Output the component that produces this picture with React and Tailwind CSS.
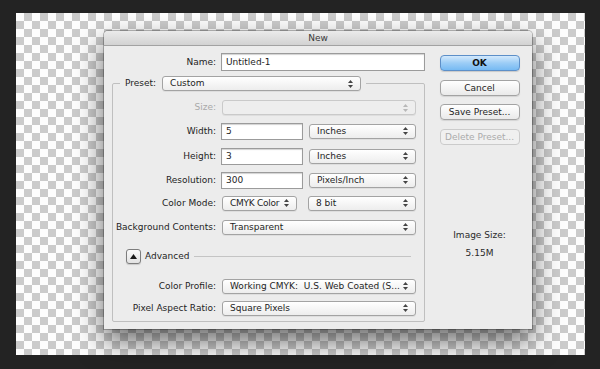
import React from "react";

const font = "font-['DejaVu_Sans',sans-serif]";

function Arrows({ disabled }) {
  return (
    <svg width="5" height="8" viewBox="0 0 5 8" className="ml-auto mr-[7px] shrink-0">
      <polygon points="0,3 2.5,0 5,3" fill={disabled ? "#b8b8b8" : "#444"} />
      <polygon points="0,5 2.5,8 5,5" fill={disabled ? "#b8b8b8" : "#444"} />
    </svg>
  );
}

function Select({ className = "", children, disabled }) {
  return (
    <div
      className={
        "flex items-center h-[15px] rounded-[3px] border pl-[7px] text-[9px] leading-none shadow-[0_1px_0_rgba(0,0,0,0.06)] " +
        (disabled
          ? "border-[#cacaca] bg-[#eeeeee] text-[#aaa] "
          : "border-[#a3a3a3] bg-gradient-to-b from-[#ffffff] to-[#ededed] text-[#1e1e1e] ") +
        className
      }
    >
      <span className="whitespace-nowrap">{children}</span>
      <Arrows disabled={disabled} />
    </div>
  );
}

function Input({ className = "", children }) {
  return (
    <div
      className={
        "flex items-center bg-white border border-[#9b9b9b] shadow-[inset_0_1px_1px_rgba(0,0,0,0.18)] pl-[4px] text-[9px] leading-none text-[#1e1e1e] " +
        className
      }
    >
      {children}
    </div>
  );
}

function Label({ children, disabled }) {
  return (
    <div
      className={
        "w-[103px] shrink-0 text-right pr-0 text-[9px] leading-none whitespace-nowrap " +
        (disabled ? "text-[#a9a9a9]" : "text-[#1e1e1e]")
      }
    >
      {children}
    </div>
  );
}

function Button({ children, variant }) {
  const base =
    "flex items-center justify-center w-[80px] h-[16px] rounded-[4px] border text-[9px] leading-none ";
  if (variant === "default")
    return (
      <div
        className={
          base +
          "border-[#5d8fc8] bg-gradient-to-b from-[#d3e9fc] via-[#9ccdf6] to-[#76baf3] text-[#111] font-bold shadow-[0_1px_1px_rgba(0,0,0,0.15)]"
        }
      >
        {children}
      </div>
    );
  if (variant === "disabled")
    return (
      <div className={base + "border-[#cbcbcb] bg-[#f0f0f0] text-[#ababab]"}>
        {children}
      </div>
    );
  return (
    <div
      className={
        base +
        "border-[#a3a3a3] bg-gradient-to-b from-[#ffffff] to-[#eaeaea] text-[#1e1e1e] shadow-[0_1px_1px_rgba(0,0,0,0.1)]"
      }
    >
      {children}
    </div>
  );
}

export default function App() {
  return (
    <div className={"w-[600px] h-[369px] bg-[#232323] pt-[13px] pl-[16px] " + font}>
      <div className="w-[569px] h-[342px] bg-[repeating-conic-gradient(#cbcbcb_0_25%,#fdfdfd_0_50%)] bg-size-[16px_16px] pt-[18px] pl-[88px]">
        <div className="w-[428px] h-[298px] rounded-t-[4px] bg-[#ececec] shadow-[0_12px_28px_rgba(0,0,0,0.6),0_0_0_1px_rgba(0,0,0,0.25)] flex flex-col overflow-hidden">
          {/* Title bar */}
          <div className="h-[15px] shrink-0 flex items-center justify-center bg-gradient-to-b from-[#ebebeb] to-[#d2d2d2] border-b border-[#a2a2a2] text-[9px] leading-none text-[#3a3a3a]">
            New
          </div>
          <div className="flex flex-1">
            {/* Left column */}
            <div className="w-[321px] flex flex-col">
              <div className="flex items-center mt-[7px] h-[18px]">
                <div className="w-[112px] text-right text-[9px] leading-none text-[#1e1e1e]">Name:</div>
                <Input className="ml-[5px] w-[204px] h-[18px]">Untitled-1</Input>
              </div>
              <fieldset className="ml-[8px] mt-[5px] w-[313px] border border-[#bfbfbf] rounded-[2px] pb-[5px]">
                <legend className="ml-[7px] px-[5px] flex items-center h-[15px]">
                  <span className="text-[9px] leading-none text-[#1e1e1e] mr-[6px]">Preset:</span>
                  <Select className="w-[199px]">Custom</Select>
                </legend>
                <div className="flex items-center h-[15px] mt-[9px]">
                  <Label disabled>Size:</Label>
                  <Select disabled className="ml-[6px] w-[194px]"></Select>
                </div>
                <div className="flex items-center h-[16px] mt-[8px]">
                  <Label>Width:</Label>
                  <Input className="ml-[5px] w-[82px] h-[17px]">5</Input>
                  <Select className="ml-[6px] w-[107px]">Inches</Select>
                </div>
                <div className="flex items-center h-[16px] mt-[9px]">
                  <Label>Height:</Label>
                  <Input className="ml-[5px] w-[82px] h-[17px]">3</Input>
                  <Select className="ml-[6px] w-[107px]">Inches</Select>
                </div>
                <div className="flex items-center h-[16px] mt-[8px]">
                  <Label>Resolution:</Label>
                  <Input className="ml-[5px] w-[82px] h-[17px]">300</Input>
                  <Select className="ml-[6px] w-[107px]">Pixels/Inch</Select>
                </div>
                <div className="flex items-center h-[16px] mt-[7px]">
                  <Label>Color Mode:</Label>
                  <Select className="ml-[6px] w-[75px] tracking-[-0.25px]">CMYK Color</Select>
                  <Select className="ml-[11px] w-[108px]">8 bit</Select>
                </div>
                <div className="flex items-center h-[16px] mt-[8px]">
                  <Label>Background Contents:</Label>
                  <Select className="ml-[6px] w-[194px]">Transparent</Select>
                </div>
                <div className="flex items-center h-[16px] mt-[13px]">
                  <div className="ml-[13px] w-[15px] h-[15px] rounded-[3px] border border-[#7d7d7d] bg-gradient-to-b from-[#fafafa] to-[#e2e2e2] flex items-center justify-center shadow-[0_1px_1px_rgba(0,0,0,0.15)]">
                    <svg width="7" height="5" viewBox="0 0 7 5">
                      <polygon points="0,5 3.5,0 7,5" fill="#1a1a1a" />
                    </svg>
                  </div>
                  <span className="ml-[4px] text-[9px] leading-none text-[#1e1e1e]">Advanced</span>
                  <div className="ml-[5px] mr-[13px] flex-1 h-px bg-[#c4c4c4]" />
                </div>
                <div className="flex items-center h-[16px] mt-[14px]">
                  <Label>Color Profile:</Label>
                  <Select className="ml-[6px] w-[194px]">Working CMYK:&nbsp; U.S. Web Coated (S...</Select>
                </div>
                <div className="flex items-center h-[16px] mt-[6px]">
                  <Label>Pixel Aspect Ratio:</Label>
                  <Select className="ml-[6px] w-[194px]">Square Pixels</Select>
                </div>
              </fieldset>
            </div>
            {/* Right column */}
            <div className="flex-1 flex flex-col items-center pl-[2px]">
              <div className="mt-[9px]">
                <Button variant="default">OK</Button>
              </div>
              <div className="mt-[9px]">
                <Button>Cancel</Button>
              </div>
              <div className="mt-[8px]">
                <Button>Save Preset...</Button>
              </div>
              <div className="mt-[9px]">
                <Button variant="disabled">Delete Preset...</Button>
              </div>
              <div className="mt-[84px] text-[9px] leading-[12px] text-[#2a2a2a]">Image Size:</div>
              <div className="mt-[6px] text-[9px] leading-[12px] text-[#2a2a2a]">5.15M</div>
            </div>
          </div>
        </div>
      </div>
    </div>
  );
}
